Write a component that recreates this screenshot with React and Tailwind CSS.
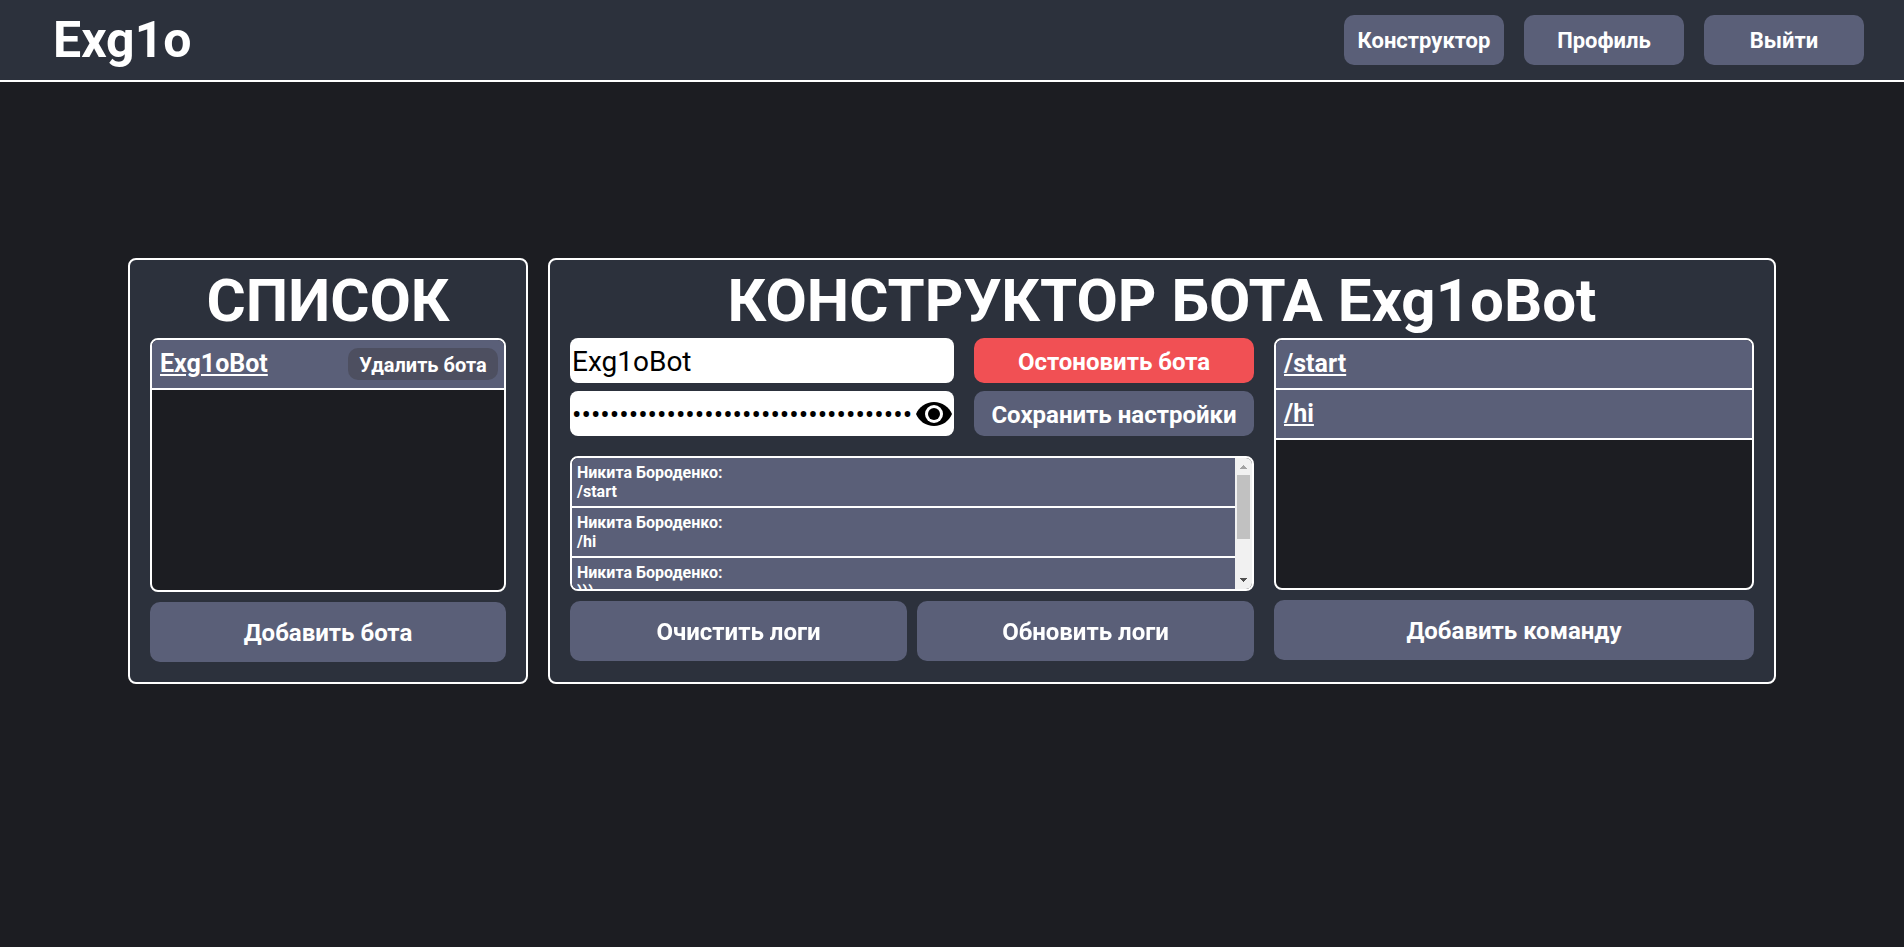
const FONT = "font-['Roboto','Liberation_Sans',sans-serif]";

function Button({ className = "", children }) {
  return (
    <button type="button" className={`rounded-[10px] pt-[2px] text-center leading-none font-bold text-white ${className}`}>
      {children}
    </button>
  );
}

function Panel({ title, className = "", children }) {
  return (
    <section className={`flex flex-col rounded-lg border-2 border-white bg-[#2c313c] px-5 pb-5 ${className}`}>
      <h2 className="pt-1 text-center text-[60px] leading-[74px] font-bold whitespace-nowrap">{title}</h2>
      {children}
    </section>
  );
}

const LOGS = ["/start", "/hi", ")))"];
const COMMANDS = ["/start", "/hi"];

function Logs() {
  return (
    <div className="flex h-[135px] overflow-hidden rounded-lg border-2 border-white bg-[#1c1d22]">
      <ul className="min-w-0 flex-1 overflow-y-auto [scrollbar-width:none]">
        {LOGS.map((text, i) => (
          <li key={i} className="h-[50px] border-b-2 border-white bg-[#5a5f78] px-[5px] pt-[5px] text-base leading-[19px] font-bold">
            <p>Никита Бороденко:</p>
            <p>{text}</p>
          </li>
        ))}
      </ul>
      <div className="flex w-[17px] flex-col items-center bg-[#f1f1f1]" aria-hidden="true">
        <svg viewBox="0 0 17 17" className="size-[17px]" shapeRendering="crispEdges">
          <path d="M8 7h1v1h1v1h1v1h1v1H5v-1h1V9h1V8h1z" fill="#a3a3a3" />
        </svg>
        <div className="h-16 w-[13px] bg-[#c1c1c1]" />
        <svg viewBox="0 0 17 17" className="mt-auto size-[17px]" shapeRendering="crispEdges">
          <path d="M5 6h7v1h-1v1h-1v1H9v1H8V9H7V8H6V7H5z" fill="#505050" />
        </svg>
      </div>
    </div>
  );
}

export default function App() {
  return (
    <div className={`flex min-h-screen flex-col bg-[#1c1d22] text-white ${FONT}`}>
      <header className="flex h-[82px] items-center justify-between border-b-2 border-white bg-[#2c313c] pr-10 pl-[53px]">
        <h1 className="text-[50px] leading-[52px] font-bold">Exg1o</h1>
        <nav className="flex gap-5">
          {["Конструктор", "Профиль", "Выйти"].map((name) => (
            <a key={name} href="#" className="flex h-[50px] w-40 items-center justify-center rounded-[10px] bg-[#5a5f78] text-[22px] font-bold">
              {name}
            </a>
          ))}
        </nav>
      </header>

      <main className="flex flex-1 flex-col px-5 pt-44">
        <div className="flex justify-center gap-5">
          <Panel title="СПИСОК" className="w-[400px]">
            <ul className="h-[254px] overflow-hidden rounded-lg border-2 border-white bg-[#1c1d22]">
              <li className="flex h-[50px] items-center justify-between border-b-2 border-white bg-[#5a5f78] pr-[6px] pl-2">
                <a href="#" className="text-[25px] font-bold underline">Exg1oBot</a>
                <Button className="h-8 w-[150px] bg-[#4d4f60] text-xl leading-none">Удалить бота</Button>
              </li>
            </ul>
            <Button className="mt-[10px] h-[60px] bg-[#5a5f78] text-[24px]">Добавить бота</Button>
          </Panel>

          <Panel title="КОНСТРУКТОР БОТА Exg1oBot" className="w-[1228px]">
            <div className="flex gap-5">
              <div className="flex min-w-0 flex-1 flex-col">
                <form className="grid grid-cols-[minmax(0,1fr)_280px] gap-x-5 gap-y-2" onSubmit={(e) => e.preventDefault()}>
                  <input
                    aria-label="Имя бота"
                    defaultValue="Exg1oBot"
                    className="h-[45px] min-w-0 rounded-lg bg-white px-[2px] pt-[2px] text-[28px] text-black outline-none"
                  />
                  <Button className="h-[45px] bg-[#f15054] text-[24px]">Остоновить бота</Button>
                  <div className="flex h-[45px] items-center rounded-lg bg-white pr-[2px]">
                    <input
                      type="password"
                      aria-label="Токен бота"
                      defaultValue="000000000000000000000000000000000000"
                      className="h-full min-w-0 flex-1 rounded-lg px-[2px] pt-[2px] text-[28px] text-black outline-none"
                    />
                    <button type="button" aria-label="Показать токен">
                      <svg viewBox="0 0 36 24" className="h-6 w-9">
                        <path d="M18 0C9.800 0 2.800 5 0 12c2.800 7 9.800 12 18 12s15.200-5 18-12C33.200 5 26.200 0 18 0z" fill="#000" />
                        <circle cx="18" cy="12" r="9" fill="#fff" />
                        <circle cx="18" cy="12" r="6" fill="#000" />
                      </svg>
                    </button>
                  </div>
                  <Button className="h-[45px] bg-[#5a5f78] text-[24px]">Сохранить настройки</Button>
                </form>
                <div className="mt-5">
                  <Logs />
                </div>
                <div className="mt-[10px] grid grid-cols-2 gap-[10px]">
                  <Button className="h-[60px] bg-[#5a5f78] text-[24px]">Очистить логи</Button>
                  <Button className="h-[60px] bg-[#5a5f78] text-[24px]">Обновить логи</Button>
                </div>
              </div>
              <div className="flex w-[480px] flex-col">
                <ul className="h-[252px] overflow-hidden rounded-lg border-2 border-white bg-[#1c1d22]">
                  {COMMANDS.map((c) => (
                    <li key={c} className="flex h-[50px] items-center border-b-2 border-white bg-[#5a5f78] px-2">
                      <a href="#" className="text-[25px] font-bold underline">{c}</a>
                    </li>
                  ))}
                </ul>
                <Button className="mt-[10px] h-[60px] bg-[#5a5f78] text-[24px]">Добавить команду</Button>
              </div>
            </div>
          </Panel>
        </div>
      </main>
    </div>
  );
}
